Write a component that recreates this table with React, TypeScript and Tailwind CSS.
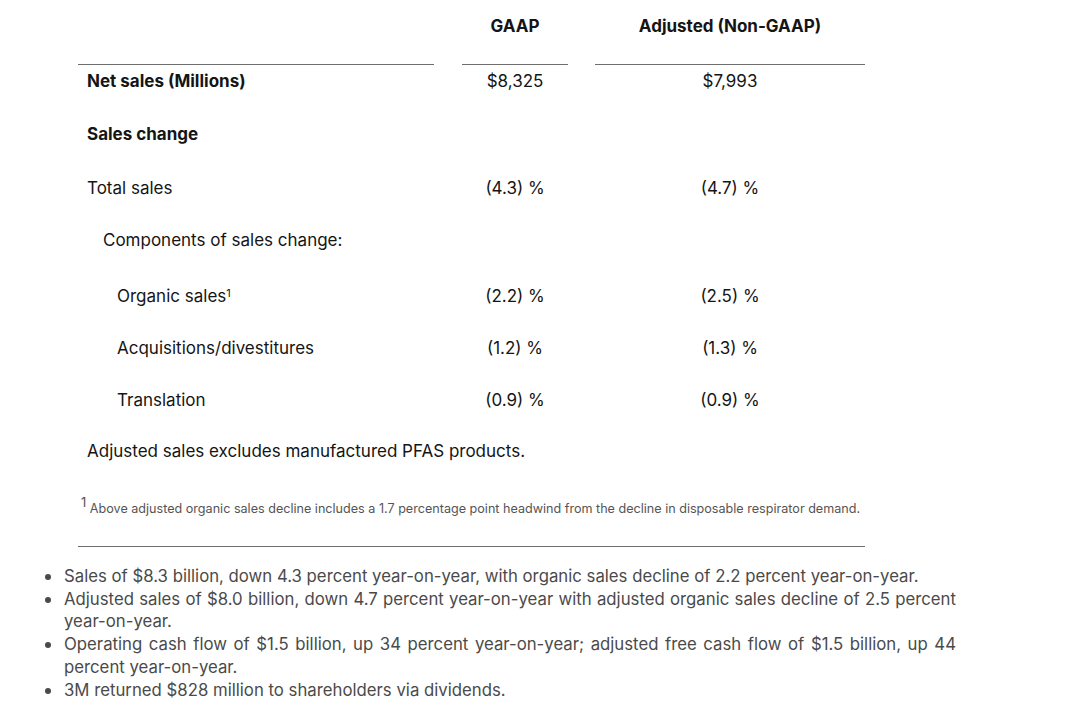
const font = { fontFamily: "Inter, 'Liberation Sans', sans-serif" };

type Row = {
  label: string;
  gaap?: string;
  adj?: string;
  indent?: string;
  bold?: boolean;
  sup?: string;
  h: string;
};

const rows: Row[] = [
  { label: "Sales change", bold: true, h: "mt-[10px] h-[52px]" },
  { label: "Total sales", gaap: "(4.3) %", adj: "(4.7) %", h: "mt-[2px] h-[52px]" },
  { label: "Components of sales change:", indent: "pl-[16px]", h: "h-[52px]" },
  { label: "Organic sales", sup: "1", gaap: "(2.2) %", adj: "(2.5) %", indent: "pl-[30px]", h: "mt-[4px] h-[52px]" },
  { label: "Acquisitions/divestitures", gaap: "(1.2) %", adj: "(1.3) %", indent: "pl-[30px]", h: "h-[52px]" },
  { label: "Translation", gaap: "(0.9) %", adj: "(0.9) %", indent: "pl-[30px]", h: "h-[51px]" },
];

const bullets = [
  "Sales of $8.3 billion, down 4.3 percent year-on-year, with organic sales decline of 2.2 percent year-on-year.",
  "Adjusted sales of $8.0 billion, down 4.7 percent year-on-year with adjusted organic sales decline of 2.5 percent year-on-year.",
  "Operating cash flow of $1.5 billion, up 34 percent year-on-year; adjusted free cash flow of $1.5 billion, up 44 percent year-on-year.",
  "3M returned $828 million to shareholders via dividends.",
];

export default function App() {
  return (
    <div className="min-h-[712px] w-[1080px] bg-white text-[#151515]" style={font}>
      <div className="pl-[78px]">
        {/* header */}
        <div className="flex h-[64px] items-start pt-[14px] text-[17px] font-bold">
          <div className="w-[356px]" />
          <div className="ml-[28px] w-[106px] text-center">GAAP</div>
          <div className="ml-[27px] w-[270px] text-center">Adjusted (Non-GAAP)</div>
        </div>

        {/* net sales */}
        <div className="flex h-[35px] items-center text-[17px]">
          <div className="flex h-full w-[356px] items-center border-t border-[#6e6e6e] pl-[9px] font-bold">
            Net sales (Millions)
          </div>
          <div className="ml-[28px] flex h-full w-[106px] items-center justify-center border-t border-[#6e6e6e]">
            $8,325
          </div>
          <div className="ml-[27px] flex h-full w-[270px] items-center justify-center border-t border-[#6e6e6e]">
            $7,993
          </div>
        </div>

        {rows.map((r) => (
          <div key={r.label} className={`flex items-center text-[17px] ${r.h}`}>
            <div className={`w-[356px] pl-[9px] ${r.bold ? "font-bold" : ""}`}>
              <span className={r.indent}>
                {r.label}
                {r.sup && <sup className="text-[11px]">{r.sup}</sup>}
              </span>
            </div>
            <div className="ml-[28px] w-[106px] text-center">{r.gaap}</div>
            <div className="ml-[27px] w-[270px] text-center">{r.adj}</div>
          </div>
        ))}

        <div className="flex h-[52px] items-center pl-[9px] text-[17px]">
          Adjusted sales excludes manufactured PFAS products.
        </div>

        <div className="mt-[22px] w-[800px] pl-[3px] text-[12.6px] text-[#555]">
          <sup className="text-[13px]">1</sup> Above adjusted organic sales decline includes a 1.7 percentage point headwind from the decline in disposable respirator demand.
        </div>

        <div className="mt-[27px] w-[787px] border-t border-[#6e6e6e]" />
      </div>

      <ul className="mt-[18px] w-[956px] pl-[64px] text-justify text-[16.75px] leading-[22.8px] text-[#4a4a4a]">
        {bullets.map((b) => (
          <li key={b} className="relative">
            <span className="absolute left-[-19px] top-[9px] h-[6px] w-[6px] rounded-full bg-[#4a4a4a]" />
            {b}
          </li>
        ))}
      </ul>
    </div>
  );
}
